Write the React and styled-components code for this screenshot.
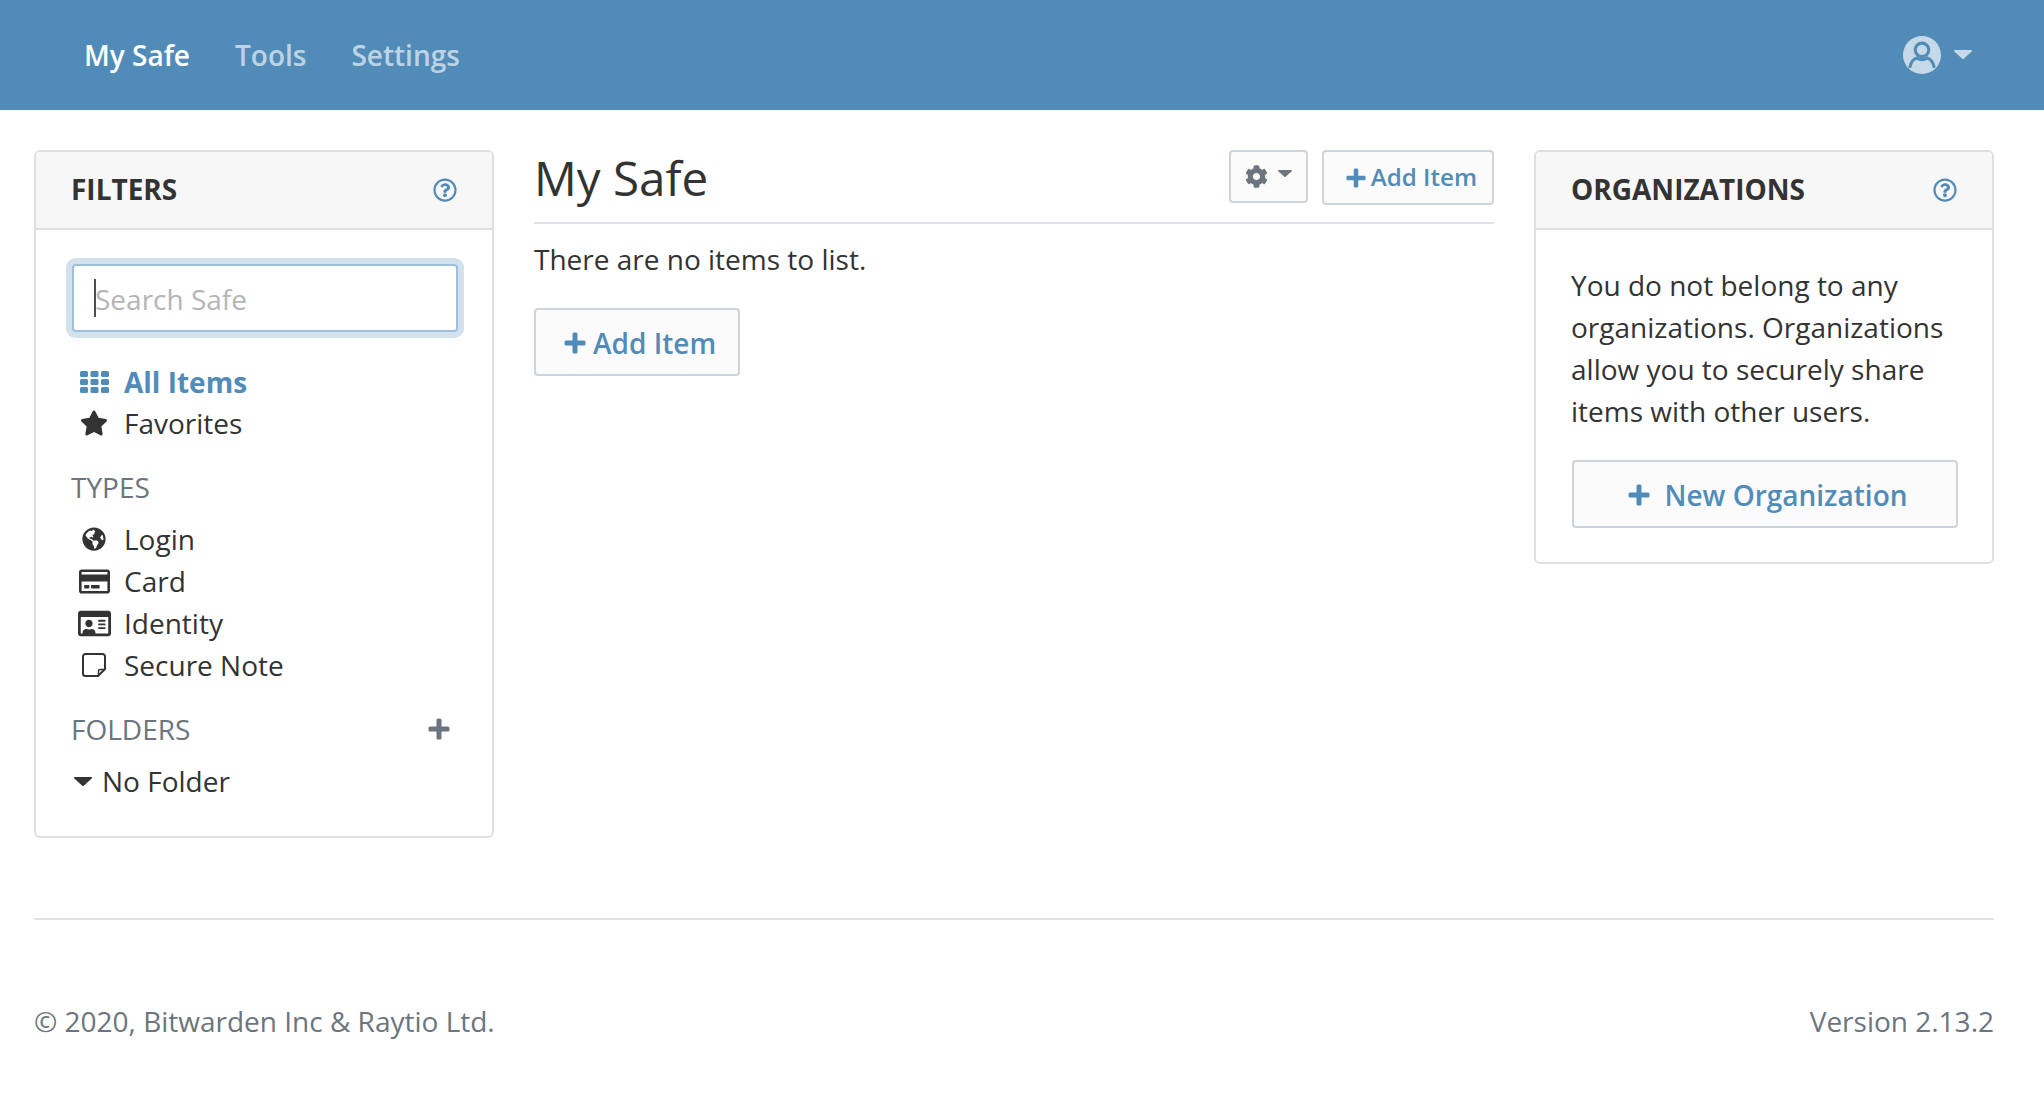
import React from 'react';
import styled, { createGlobalStyle } from 'styled-components';
import {
  FaStar, FaGlobeAmericas, FaRegCreditCard, FaRegIdCard,
  FaRegQuestionCircle, FaCog,
} from 'react-icons/fa';

const brand = '#518cb9';
const text = '#333333';
const muted = '#6c757d';

const Global = createGlobalStyle`
  html, body { margin: 0; padding: 0; background: #fff; }
  body { font-family: "Open Sans", "Liberation Sans", sans-serif; font-size: 28px; line-height: 42px; color: ${text}; }
  * { box-sizing: border-box; }
`;

const TopBar = styled.header`
  height: 110px; background: ${brand}; display: flex; align-items: center;
  justify-content: space-between; padding: 0 72px 0 84px;
`;
const TopNav = styled.nav`display: flex; gap: 45px;`;
const TopLink = styled.span`
  font-weight: 600; font-size: 28px;
  color: ${p => (p.$active ? '#ffffff' : 'rgba(255,255,255,.65)')};
`;
const UserMenu = styled.div`display: flex; align-items: center; gap: 13px; color: #c6d9e8; margin-top: -1px;`;

const Page = styled.main`
  padding: 40px 50px 0 34px; display: grid; grid-template-columns: 460px 960px 460px; column-gap: 40px; align-items: start;
`;
const Card = styled.section`border: 2px solid #dfdfdf; border-radius: 6px; background: #fff;`;
const CardHead = styled.div`
  height: 78px; background: #f7f7f7; border-bottom: 2px solid #dfdfdf; border-radius: 4px 4px 0 0;
  display: flex; align-items: center; justify-content: space-between; padding: 0 35px;
`;
const CardTitle = styled.h2`margin: -2px 0 0; font-size: 28px; line-height: 42px; font-weight: 700; text-transform: uppercase; color: ${text};`;
const Help = styled.span`display: flex; color: ${brand}; font-size: 24px;`;
const CardBody = styled.div`padding: 34px 34px 34px 36px;`;

const SearchWrap = styled.div`position: relative; margin-bottom: 29px;`;
const SearchInput = styled.input`
  display: block; width: 100%; height: 68px; padding: 2px 21px 0; border: 2px solid #a0c0d9; border-radius: 4px;
  box-shadow: 0 0 0 6px #d2e1ed; outline: none; background: #fff;
  font: 400 28px/42px "Open Sans", sans-serif; color: ${text};
  &::placeholder { color: #b5b5b5; opacity: 1; }
`;
const Caret = styled.span`position: absolute; left: 22px; top: 15px; width: 2px; height: 38px; background: #4a4f55;`;

const List = styled.ul`list-style: none; margin: 0 0 21px; padding: 0;`;
const Row = styled.li`
  display: flex; align-items: center; height: 42px; padding-bottom: ${p => (p.$active ? 0 : 2)}px;
  font-weight: ${p => (p.$active ? 700 : 400)};
  color: ${p => (p.$active ? brand : text)};
`;
const IconSlot = styled.span`width: 52px; display: flex; justify-content: center; padding-right: 8px; font-size: ${p => p.$size || 29}px;`;
const SectionHead = styled.div`
  display: flex; align-items: center; justify-content: space-between; height: 42px; color: ${muted};
  margin: 0 0 ${p => p.$gap}px -1px; padding-right: 8px;
`;
const AddIcon = styled.span`display: flex; color: ${muted};`;
const FolderRow = styled.div`display: flex; align-items: center; height: 42px;`;
const FolderCaret = styled.span`display: flex; width: 30px; padding-left: 2px; color: ${text};`;

const MainHead = styled.div`
  height: 74px; border-bottom: 2px solid #dee2e6; display: flex; align-items: flex-start; justify-content: space-between;
`;
const Title = styled.h1`margin: 0; font-size: 47.6px; line-height: 56px; font-weight: 400; color: ${text};`;
const Actions = styled.div`display: flex; gap: 14px;`;
const Button = styled.button`
  display: inline-flex; align-items: center; justify-content: center; gap: ${p => p.$gap}px;
  background: #fbfbfb; border: 2px solid #ced4da; border-radius: 4px;
  padding: ${p => p.$top || 0}px ${p => p.$right || 0}px 0 ${p => p.$left || 0}px;
  height: ${p => p.$h}px; width: ${p => p.$w || 'auto'}; color: ${brand}; margin: 0;
  font: 600 ${p => p.$fs}px/1 "Open Sans", sans-serif;
`;
const GearButton = styled(Button)`color: ${muted};`;
const GearCaret = styled.span`display: flex; margin-top: -6px;`;
const Empty = styled.p`margin: 14px 0 28px; color: ${text};`;
const OrgText = styled.p`margin: 0 0 28px -1px;`;

const Rule = styled.hr`margin: 80px 50px 80px 34px; border: 0; border-top: 2px solid #e2e2e2;`;
const Footer = styled.footer`
  display: flex; justify-content: space-between; padding: 0 50px 0 34px; color: ${muted}; margin-bottom: 55px;
`;

const Plus = ({ size }) => (
  <svg width={size} height={size} viewBox="0 0 22 22" fill="currentColor" aria-hidden="true">
    <path d="M8.500 2a1.500 1.500 0 0 1 1.500-1.500h2A1.500 1.500 0 0 1 13.500 2v6.500H20a1.500 1.500 0 0 1 1.500 1.500v2a1.500 1.500 0 0 1-1.500 1.500h-6.500V20a1.500 1.500 0 0 1-1.500 1.500h-2A1.500 1.500 0 0 1 8.500 20v-6.500H2A1.500 1.500 0 0 1 .5 12v-2A1.500 1.500 0 0 1 2 8.500h6.500z" />
  </svg>
);

const Down = ({ w, h }) => (
  <svg width={w} height={h} viewBox="0 0 18 9" fill="currentColor" aria-hidden="true"><path d="M1 0h16c.9 0 1.300 1 .7 1.600L9.700 8.700a1 1 0 0 1-1.400 0L.3 1.600C-.3 1 .1 0 1 0z" /></svg>
);

const GridIcon = () => (
  <svg width="29" height="22" viewBox="0 0 29 22" fill="currentColor" aria-hidden="true">
    {[0, 8, 16].flatMap(y => [0, 10.5, 21].map(x => (
      <rect key={`${x}-${y}`} x={x} y={y} width="8" height="6" rx="1.500" />
    )))}
  </svg>
);

const NoteIcon = () => (
  <svg width="24" height="24" viewBox="0 0 24 24" fill="none" stroke="currentColor" strokeWidth="2" strokeLinejoin="round" aria-hidden="true">
    <path d="M3.500 1h17A2.500 2.500 0 0 1 23 3.500V16l-7 7H3.500A2.500 2.500 0 0 1 1 20.500v-17A2.500 2.500 0 0 1 3.500 1z" />
    <path d="M23 16.500h-5a1.500 1.500 0 0 0-1.500 1.500v5" strokeWidth="1.500" />
  </svg>
);

const UserIcon = () => (
  <svg width="38" height="38" viewBox="0 0 37 37" aria-hidden="true">
    <circle cx="18.5" cy="18.5" r="18.5" fill="#c6d9e8" />
    <circle cx="18.5" cy="13.5" r="6.6" fill="#c6d9e8" stroke={brand} strokeWidth="3" />
    <path d="M6.500 31c1-5 3.500-8.600 6.800-9.600 3.200 2 7.200 2 10.400 0 3.300 1 5.800 4.600 6.800 9.600" fill="none" stroke={brand} strokeWidth="3" />
  </svg>
);

export default function App() {
  return (
    <>
      <Global />
      <TopBar>
        <TopNav>
          <TopLink $active>My Safe</TopLink>
          <TopLink>Tools</TopLink>
          <TopLink>Settings</TopLink>
        </TopNav>
        <UserMenu>
          <UserIcon />
          <Down w={18} h={9} />
        </UserMenu>
      </TopBar>
      <Page>
        <Card>
          <CardHead>
            <CardTitle>Filters</CardTitle>
            <Help><FaRegQuestionCircle /></Help>
          </CardHead>
          <CardBody>
            <SearchWrap>
              <SearchInput readOnly placeholder="Search Safe" />
              <Caret />
            </SearchWrap>
            <List>
              <Row $active><IconSlot><GridIcon /></IconSlot>All Items</Row>
              <Row><IconSlot $size={28}><FaStar /></IconSlot>Favorites</Row>
            </List>
            <SectionHead $gap={11}>TYPES</SectionHead>
            <List>
              <Row><IconSlot $size={24}><FaGlobeAmericas /></IconSlot>Login</Row>
              <Row><IconSlot $size={31}><FaRegCreditCard /></IconSlot>Card</Row>
              <Row><IconSlot $size={33}><FaRegIdCard /></IconSlot>Identity</Row>
              <Row><IconSlot><NoteIcon /></IconSlot>Secure Note</Row>
            </List>
            <SectionHead $gap={10}>
              FOLDERS
              <AddIcon><Plus size={22} /></AddIcon>
            </SectionHead>
            <FolderRow>
              <FolderCaret><Down w={18} h={9} /></FolderCaret>
              No Folder
            </FolderRow>
          </CardBody>
        </Card>
        <div>
          <MainHead>
            <Title>My Safe</Title>
            <Actions>
              <GearButton $h={53} $w="79px" $fs={23} $gap={10}>
                <FaCog /><GearCaret><Down w={14} h={7} /></GearCaret>
              </GearButton>
              <Button $h={55} $left={22} $right={15} $fs={24.2} $gap={5}><Plus size={20} />Add Item</Button>
            </Actions>
          </MainHead>
          <Empty>There are no items to list.</Empty>
          <Button $h={68} $left={28} $right={22} $top={2} $fs={28} $gap={7}><Plus size={22} />Add Item</Button>
        </div>
        <Card>
          <CardHead>
            <CardTitle>Organizations</CardTitle>
            <Help><FaRegQuestionCircle /></Help>
          </CardHead>
          <CardBody>
            <OrgText>You do not belong to any organizations. Organizations allow you to securely share items with other users.</OrgText>
            <Button $h={68} $w="100%" $top={2} $left={6} $fs={28} $gap={14}><Plus size={22} />New Organization</Button>
          </CardBody>
        </Card>
      </Page>
      <Rule />
      <Footer>
        <span>© 2020, Bitwarden Inc &amp; Raytio Ltd.</span>
        <span>Version 2.13.2</span>
      </Footer>
    </>
  );
}
